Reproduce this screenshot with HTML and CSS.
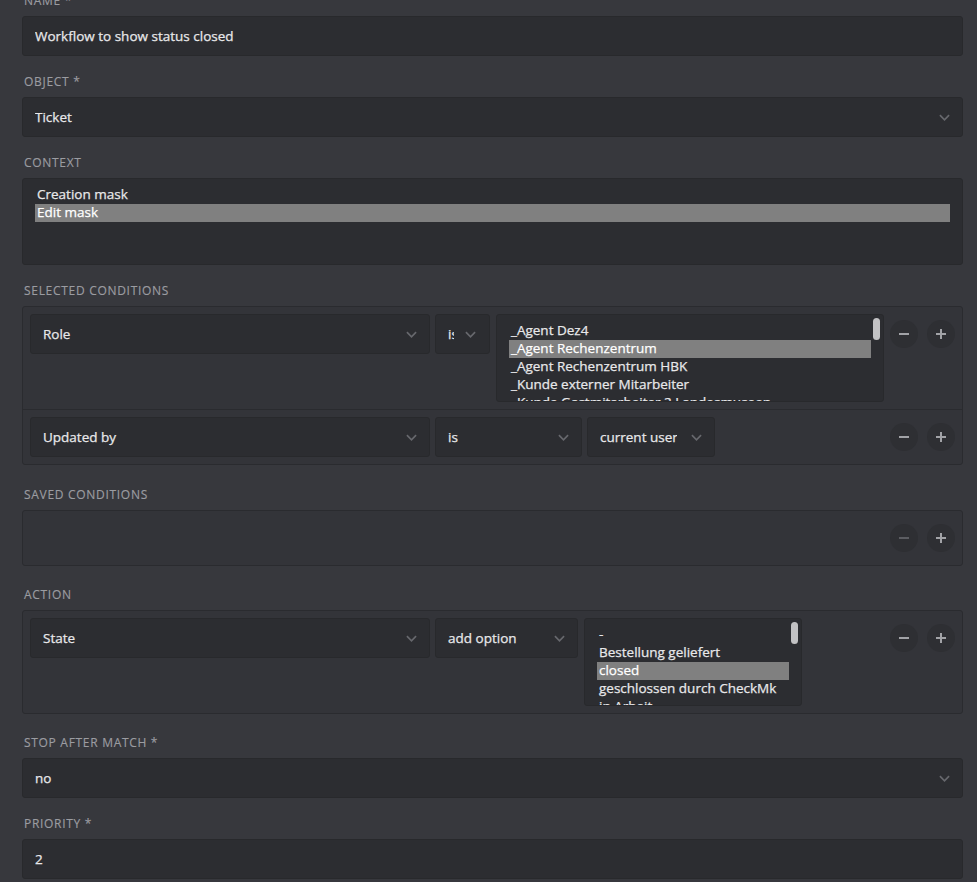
FILE: index.html
```html
<!DOCTYPE html>
<html lang="en">
<head>
<meta charset="utf-8">
<title>Workflow</title>
<link rel="stylesheet" href="styles.css">
</head>
<body>
<div class="form">

  <div class="field">
    <div class="label">Name *</div>
    <div class="input"><span class="txt">Workflow to show status closed</span></div>
  </div>

  <div class="field">
    <div class="label">Object *</div>
    <div class="input select"><span class="txt">Ticket</span><svg class="chev" viewBox="0 0 12 7"><path d="M1 1l5 5 5-5"/></svg></div>
  </div>

  <div class="field">
    <div class="label">Context</div>
    <div class="list list-context">
      <div class="opt">Creation mask</div>
      <div class="opt sel">Edit mask</div>
    </div>
  </div>

  <div class="field group-field">
    <div class="label">Selected conditions</div>
    <div class="group">
      <div class="row">
        <div class="input select w-main"><span class="txt">Role</span><svg class="chev" viewBox="0 0 12 7"><path d="M1 1l5 5 5-5"/></svg></div>
        <div class="input select w-is-narrow"><span class="txt">is</span><svg class="chev" viewBox="0 0 12 7"><path d="M1 1l5 5 5-5"/></svg></div>
        <div class="list list-role">
          <div class="opt">_Agent Dez4</div>
          <div class="opt sel">_Agent Rechenzentrum</div>
          <div class="opt">_Agent Rechenzentrum HBK</div>
          <div class="opt">_Kunde externer Mitarbeiter</div>
          <div class="opt">_Kunde Gastmitarbeiter 2 Landesmuseen</div>
          <div class="thumb"></div>
        </div>
        <div class="btns">
          <div class="circ"><svg viewBox="0 0 12 12"><path d="M1 6h10"/></svg></div>
          <div class="circ"><svg viewBox="0 0 12 12"><path d="M1 6h10M6 1v10"/></svg></div>
        </div>
      </div>
      <div class="row">
        <div class="input select w-main"><span class="txt">Updated by</span><svg class="chev" viewBox="0 0 12 7"><path d="M1 1l5 5 5-5"/></svg></div>
        <div class="input select w-is"><span class="txt">is</span><svg class="chev" viewBox="0 0 12 7"><path d="M1 1l5 5 5-5"/></svg></div>
        <div class="input select w-user"><span class="txt">current user</span><svg class="chev" viewBox="0 0 12 7"><path d="M1 1l5 5 5-5"/></svg></div>
        <div class="btns">
          <div class="circ"><svg viewBox="0 0 12 12"><path d="M1 6h10"/></svg></div>
          <div class="circ"><svg viewBox="0 0 12 12"><path d="M1 6h10M6 1v10"/></svg></div>
        </div>
      </div>
    </div>
  </div>

  <div class="field group-field tight">
    <div class="label">Saved conditions</div>
    <div class="group">
      <div class="row">
        <div class="btns">
          <div class="circ disabled"><svg viewBox="0 0 12 12"><path d="M1 6h10"/></svg></div>
          <div class="circ"><svg viewBox="0 0 12 12"><path d="M1 6h10M6 1v10"/></svg></div>
        </div>
      </div>
    </div>
  </div>

  <div class="field group-field tight">
    <div class="label">Action</div>
    <div class="group">
      <div class="row">
        <div class="input select w-main"><span class="txt">State</span><svg class="chev" viewBox="0 0 12 7"><path d="M1 1l5 5 5-5"/></svg></div>
        <div class="input select w-addopt"><span class="txt">add option</span><svg class="chev" viewBox="0 0 12 7"><path d="M1 1l5 5 5-5"/></svg></div>
        <div class="list list-state">
          <div class="opt">-</div>
          <div class="opt">Bestellung geliefert</div>
          <div class="opt sel">closed</div>
          <div class="opt">geschlossen durch CheckMk</div>
          <div class="opt">in Arbeit</div>
          <div class="thumb"></div>
        </div>
        <div class="btns">
          <div class="circ"><svg viewBox="0 0 12 12"><path d="M1 6h10"/></svg></div>
          <div class="circ"><svg viewBox="0 0 12 12"><path d="M1 6h10M6 1v10"/></svg></div>
        </div>
      </div>
    </div>
  </div>

  <div class="field">
    <div class="label">Stop after match *</div>
    <div class="input select"><span class="txt">no</span><svg class="chev" viewBox="0 0 12 7"><path d="M1 1l5 5 5-5"/></svg></div>
  </div>

  <div class="field">
    <div class="label">Priority *</div>
    <div class="input"><span class="txt">2</span></div>
  </div>

</div>
</body>
</html>
```
FILE: styles.css
```css
html, body {
  margin: 0;
  padding: 0;
  background: #37383d;
  height: 100%;
  overflow: hidden;
}

body {
  font-family: "Open Sans", "Noto Sans", sans-serif;
  font-size: 13.5px;
  color: #e8e8ea;
  -webkit-text-stroke: 0.25px currentColor;
}

.form {
  margin-top: -8px;
  padding: 0 14px 0 22px;
}

.field {
  margin-bottom: 17px;
}

.group-field {
  margin-bottom: 21px;
}

.group-field.tight {
  margin-bottom: 20px;
}

.label {
  height: 16px;
  line-height: 18px;
  margin: 0 0 8px 2px;
  font-size: 12px;
  letter-spacing: 0.7px;
  text-transform: uppercase;
  color: #9b9ca1;
  white-space: nowrap;
  -webkit-text-stroke: 0.15px currentColor;
}

.input {
  box-sizing: border-box;
  height: 40px;
  background: #2c2d31;
  border: 1px solid #28292c;
  border-radius: 3px;
  padding: 0 12px;
  display: flex;
  align-items: center;
  flex: none;
}

.select {
  padding-right: 12px;
}

.txt {
  flex: 1;
  min-width: 0;
  overflow: hidden;
  white-space: nowrap;
}

.chev {
  flex: none;
  width: 11px;
  height: 7px;
  margin-left: 11px;
  fill: none;
  stroke: #67686d;
  stroke-width: 1.8;
}

.list {
  position: relative;
  box-sizing: border-box;
  background: #2c2d31;
  border: 1px solid #28292c;
  border-radius: 3px;
  padding: 7px 12px;
  overflow: hidden;
  flex: none;
}

.list-context {
  height: 87px;
}

.list-role {
  width: 388px;
  height: 88px;
}

.list-state {
  width: 218px;
  height: 88px;
}

.opt {
  height: 18px;
  line-height: 17px;
  padding: 0 2px;
  white-space: nowrap;
}

.opt.sel {
  background: #808080;
  color: #ffffff;
}

.thumb {
  position: absolute;
  top: 3px;
  right: 3px;
  width: 7px;
  height: 22px;
  border-radius: 4px;
  background: #c2c2c4;
}

.group {
  background: #333439;
  border: 1px solid #2a2b2f;
  border-radius: 3px;
}

.row {
  display: flex;
  align-items: flex-start;
  padding: 7px;
}

.row + .row {
  border-top: 1px solid #2a2b2f;
}

.w-main {
  width: 400px;
  margin-right: 5px;
}

.w-is-narrow {
  width: 55px;
  margin-right: 6px;
  padding-right: 13px;
}

.w-is {
  width: 147px;
  margin-right: 5px;
}

.w-user {
  width: 128px;
}

.w-user .chev {
  margin-left: 14px;
}

.w-addopt {
  width: 143px;
  margin-right: 6px;
}

.btns {
  margin-left: auto;
  height: 40px;
  display: flex;
  align-items: center;
  gap: 9px;
}

.circ {
  width: 28px;
  height: 28px;
  border-radius: 50%;
  background: #2e2f33;
  display: flex;
  align-items: center;
  justify-content: center;
}

.circ svg {
  width: 12px;
  height: 12px;
  fill: none;
  stroke: #a2a3a7;
  stroke-width: 2;
}

.circ.disabled svg {
  stroke: #5c5d62;
}
```
